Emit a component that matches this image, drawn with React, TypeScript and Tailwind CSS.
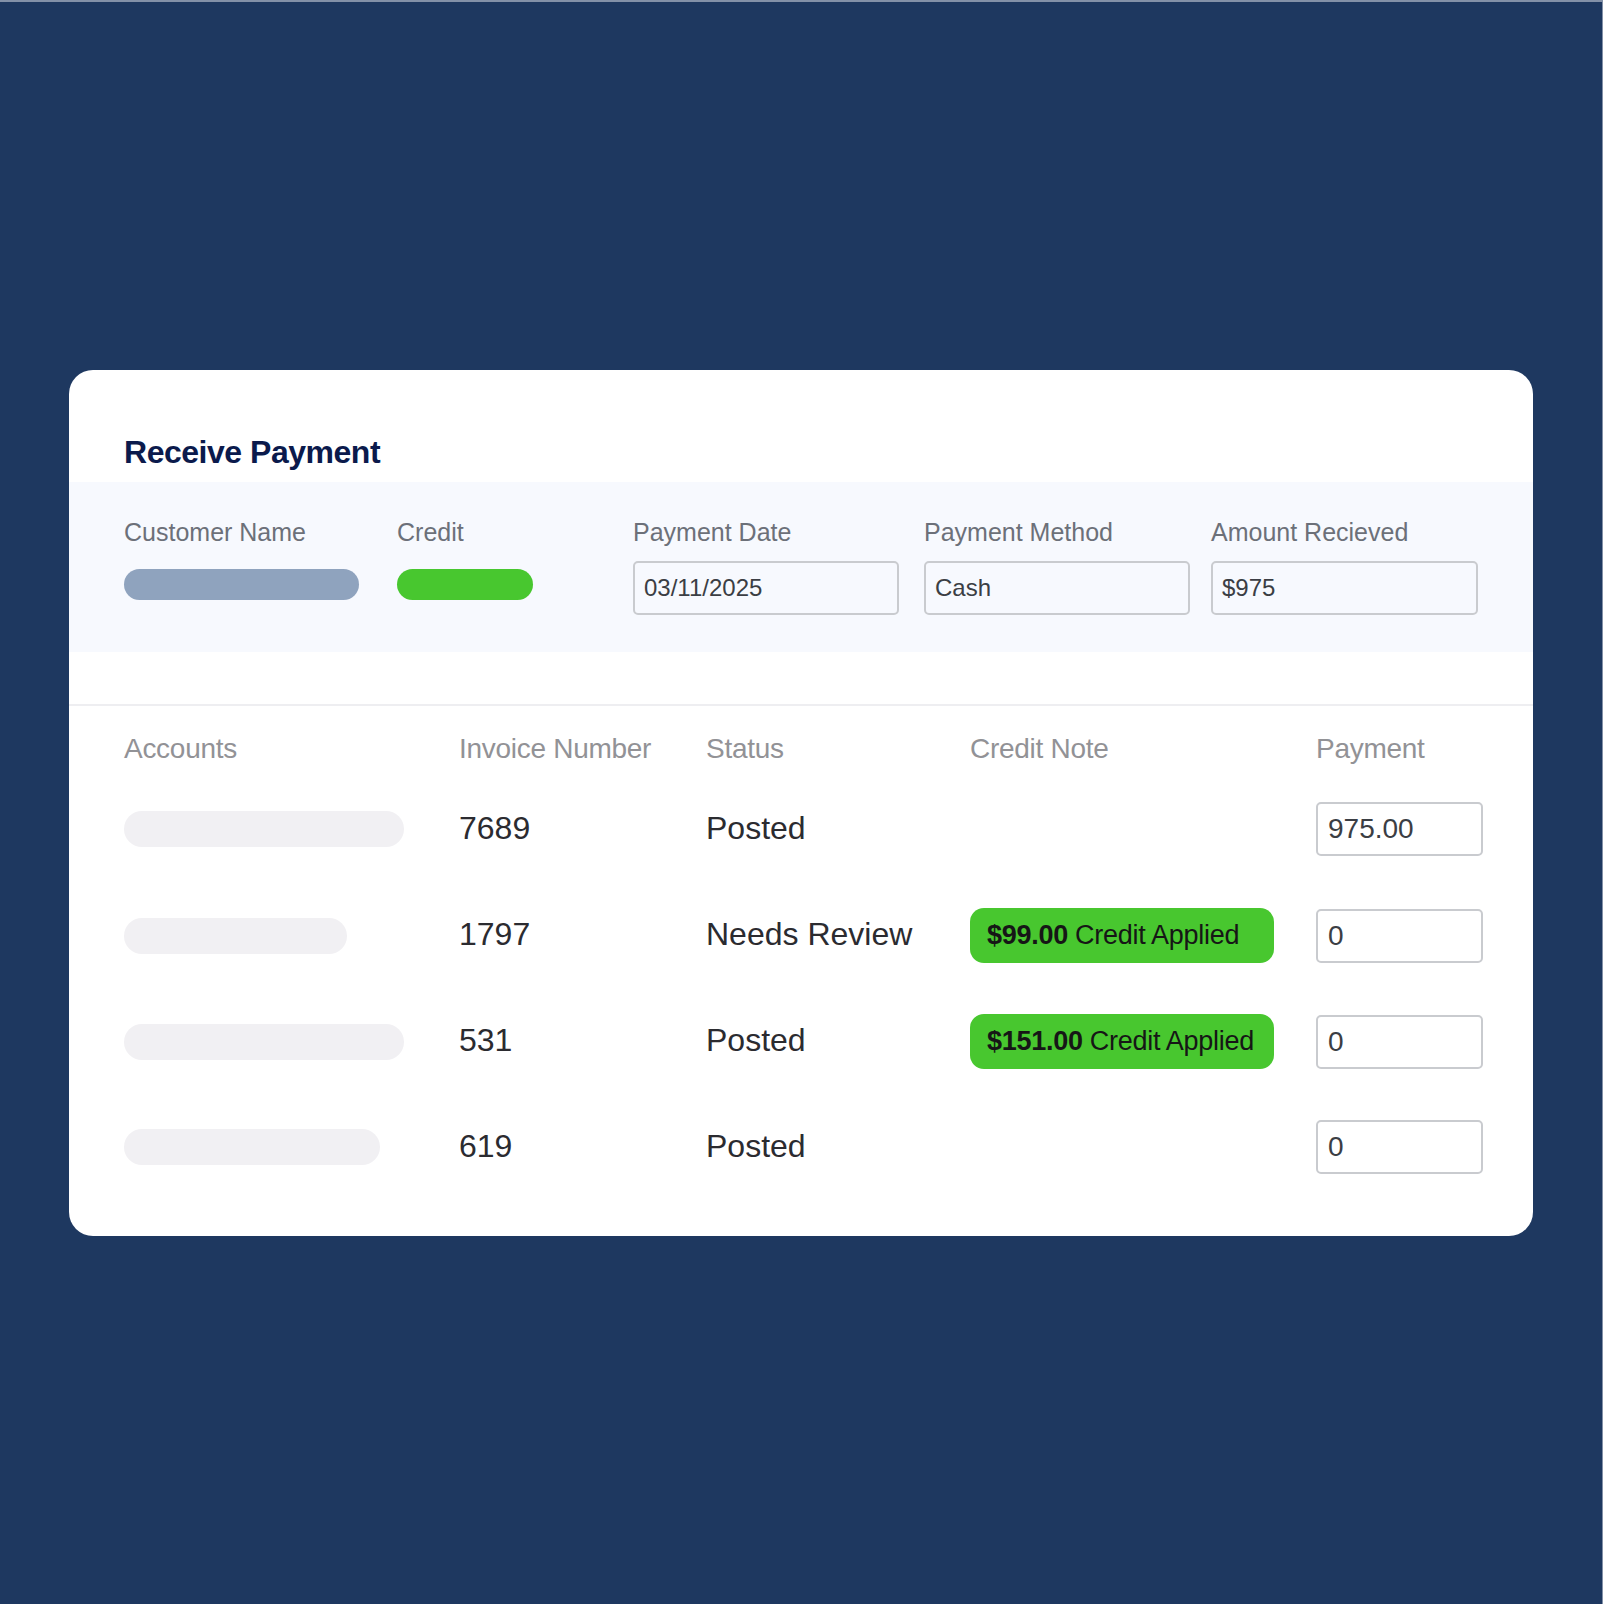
const rows = [
  { bar: "w-[280px]", invoice: "7689", status: "Posted", credit: null, payment: "975.00" },
  { bar: "w-[223px]", invoice: "1797", status: "Needs Review", credit: "$99.00", payment: "0" },
  { bar: "w-[280px]", invoice: "531", status: "Posted", credit: "$151.00", payment: "0" },
  { bar: "w-[256px]", invoice: "619", status: "Posted", credit: null, payment: "0" },
];

function Field({ label, value, width, inputWidth }: { label: string; value: string; width: string; inputWidth: string }) {
  return (
    <div className={`flex flex-col ${width}`}>
      <span className="text-[25px] leading-[30px] text-[#6c7079]">{label}</span>
      <div
        className={`mt-[14px] flex h-[54px] items-center rounded-[5px] border-2 border-[#c9cbcf] px-[9px] text-[24px] text-[#3b3e44] ${inputWidth}`}
      >
        {value}
      </div>
    </div>
  );
}

export default function App() {
  return (
    <div className="flex h-[1604px] w-full items-center justify-center border-t-2 border-r border-[#8391a8] bg-[#1e3860] font-['Liberation_Sans',Arial,sans-serif]">
      <div className="w-[1464px] overflow-hidden rounded-3xl bg-white pt-[62px] pb-[62px]">
        <h1 className="px-[55px] text-[32px] font-bold leading-[40px] tracking-[-0.015em] text-[#0b1a4c]">
          Receive Payment
        </h1>

        <div className="mt-[10px] flex bg-[#f7f9fe] px-[55px] pt-[35px] pb-[37px]">
          <div className="flex w-[273px] flex-col">
            <span className="text-[25px] leading-[30px] text-[#6c7079]">Customer Name</span>
            <div className="mt-[22px] h-[31px] w-[235px] rounded-full bg-[#8fa3be]" />
          </div>
          <div className="flex w-[236px] flex-col">
            <span className="text-[25px] leading-[30px] text-[#6c7079]">Credit</span>
            <div className="mt-[22px] h-[31px] w-[136px] rounded-full bg-[#48c72f]" />
          </div>
          <Field label="Payment Date" value="03/11/2025" width="w-[291px]" inputWidth="w-[266px]" />
          <Field label="Payment Method" value="Cash" width="w-[287px]" inputWidth="w-[266px]" />
          <Field label="Amount Recieved" value="$975" width="w-[267px]" inputWidth="w-[267px]" />
        </div>

        <div className="mt-[52px] h-[2px] bg-[#eeeef1]" />

        <div className="px-[55px] pt-[26px]">
          <div className="grid grid-cols-[335px_247px_264px_346px_167px] text-[28px] leading-[34px] tracking-[-0.01em] text-[#929296]">
            <span>Accounts</span>
            <span>Invoice Number</span>
            <span>Status</span>
            <span>Credit Note</span>
            <span>Payment</span>
          </div>

          <div className="mt-[36px] flex flex-col gap-[52px]">
            {rows.map((row) => (
              <div
                key={row.invoice}
                className="grid h-[54px] grid-cols-[335px_247px_264px_346px_167px] items-center text-[32px] text-[#2b2b30]"
              >
                <div className={`h-[36px] rounded-full bg-[#f1f0f3] ${row.bar}`} />
                <span className="-mt-[3px]">{row.invoice}</span>
                <span className="-mt-[3px]">{row.status}</span>
                <div>
                  {row.credit ? (
                    <div className="flex h-[55px] w-[304px] items-center rounded-[14px] bg-[#48c72f] px-[17px] text-[27px] tracking-[-0.01em] text-[#161616]">
                      <span className="font-bold">{row.credit}</span>
                      <span className="ml-[7px]">Credit Applied</span>
                    </div>
                  ) : null}
                </div>
                <div className="flex h-[54px] w-[167px] items-center rounded-[5px] border-2 border-[#c9cbcf] px-[10px] text-[28px] text-[#3b3e44]">
                  {row.payment}
                </div>
              </div>
            ))}
          </div>
        </div>
      </div>
    </div>
  );
}
